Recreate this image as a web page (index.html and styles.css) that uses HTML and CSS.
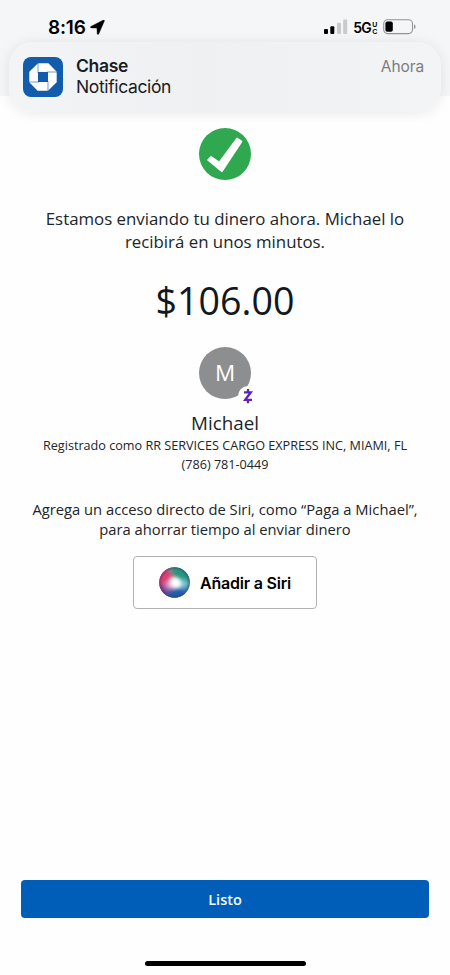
FILE: index.html
```html
<!DOCTYPE html>
<html lang="es">
<head>
<meta charset="utf-8">
<meta name="viewport" content="width=device-width, initial-scale=1">
<title>Chase</title>
<link rel="stylesheet" href="styles.css">
</head>
<body>
<div class="screen">
  <header class="top">
    <div class="status">
      <span class="time">8:16</span>
      <svg class="location" width="15" height="15" viewBox="0 0 15 15"><path d="M14.4.9 8.7 14Q7.6 15.3 7.2 13.8L6.9 8.1 1.2 7.9Q-.4 7.3.9 6.4L13 .2Q14.8-.2 14.4.9Z" fill="#000" stroke="#000" stroke-width=".4"/></svg>
      <svg class="signal" width="24" height="16" viewBox="0 0 24 16">
        <rect x="0" y="10" width="4" height="5" rx="1"/><rect x="6.3" y="7.2" width="4" height="7.8" rx="1"/>
        <rect class="off" x="13" y="3.8" width="4" height="11.2" rx="1"/><rect class="off" x="19.2" y="0.4" width="4" height="14.6" rx="1"/>
      </svg>
      <span class="network">5G</span>
      <span class="band"><span>U</span><span>C</span></span>
      <svg class="battery" width="33" height="16" viewBox="0 0 33 16">
        <rect x=".7" y=".8" width="28.8" height="13.8" rx="4" fill="none" stroke="#929394" stroke-width="1.1"/>
        <rect x="2.4" y="2.6" width="7.4" height="10.2" rx="1.8" fill="#000"/>
        <path d="M31 5.3Q32.6 6 32.6 7.7T31 10.1Z" fill="#929394"/>
      </svg>
    </div>
    <section class="notice">
      <svg class="app" width="40" height="40" viewBox="0 0 40 40">
        <rect width="40" height="40" rx="8" fill="#115dab"/>
        <path d="M15 6.3H25.4L33.7 14.8V25.2L25 33.7H14.6L6.3 25.2V14.8Z" fill="#fff"/>
        <rect x="15" y="15" width="10" height="10" fill="#115dab"/>
        <path d="M15 6V16M24 15H34M25 24V34M16 25H6" stroke="#115dab" stroke-width=".6"/>
      </svg>
      <div class="notice-text">
        <strong>Chase</strong>
        <span class="message">Notificación</span>
      </div>
      <span class="when">Ahora</span>
    </section>
  </header>

  <main class="content">
    <svg class="success" width="52" height="52" viewBox="0 0 52 52">
      <circle cx="26" cy="26" r="26" fill="#2fa84f"/>
      <path d="M9 32 12.1 28.8 20.3 34.4 38 10.4 42.6 13.5 22.9 43.3Z" fill="#fff" stroke="#fff" stroke-width="1.6" stroke-linejoin="round"/>
    </svg>
    <p class="sending"><span class="row">Estamos enviando tu dinero ahora. Michael lo</span><span class="row">recibirá en unos minutos.</span></p>
    <p class="amount"><span>$106.00</span></p>
    <div class="avatar">
      <span>M</span>
      <svg class="zelle" width="20" height="20" viewBox="0 0 20 20">
        <circle cx="10" cy="10" r="10" fill="#fefefe"/>
        <path d="M6 6.3H12.8L7.2 13.8H14M10 3V6M10 14V17.2" fill="none" stroke="#5a25b8" stroke-width="2.3"/>
      </svg>
    </div>
    <h1 class="name">Michael</h1>
    <p class="registered"><span class="row">Registrado como RR SERVICES CARGO EXPRESS INC, MIAMI, FL</span><span class="row">(786) 781-0449</span></p>
    <p class="shortcut"><span class="row">Agrega un acceso directo de Siri, como “Paga a Michael”,</span><span class="row">para ahorrar tiempo al enviar dinero</span></p>
    <button class="siri">
      <svg class="orb" width="31" height="31" viewBox="0 0 31 31">
        <defs>
          <clipPath id="disc"><circle cx="15.5" cy="15.5" r="15.3"/></clipPath>
          <filter id="soft" x="-40%" y="-40%" width="180%" height="180%"><feGaussianBlur stdDeviation="2.2"/></filter>
          <radialGradient id="rim"><stop offset=".78" stop-color="#292547" stop-opacity="0"/><stop offset="1" stop-color="#292547" stop-opacity=".4"/></radialGradient>
        </defs>
        <g clip-path="url(#disc)">
          <rect width="31" height="31" fill="#477fae"/>
          <g filter="url(#soft)">
            <path d="M8-2H33V18L17 15Z" fill="#259582"/>
            <path d="M-2 3 9 1 17 15 8 22-2 20Z" fill="#dc3a76"/>
            <path d="M-2 19 16 16 10 33H0Z" fill="#7d3f91"/>
            <path d="M8 23 26 20 25 33H7Z" fill="#225ba8"/>
            <ellipse cx="24" cy="17" rx="6" ry="4" fill="#74c6d5"/>
            <ellipse cx="11" cy="18" rx="5" ry="4" fill="#dc9cc6"/>
          </g>
          <ellipse cx="16.5" cy="16" rx="5.5" ry="5" fill="#fff" filter="url(#soft)"/>
          <path d="M10 11 18 12 22 18 17 20Z" fill="#fff" filter="url(#soft)"/>
          <circle cx="15.5" cy="15.5" r="15.5" fill="url(#rim)"/>
        </g>
      </svg>
      <span class="siri-label">Añadir a Siri</span>
    </button>
  </main>

  <footer class="bottom">
    <button class="done">Listo</button>
    <div class="home"></div>
  </footer>
</div>
</body>
</html>
```
FILE: styles.css
```css
* { box-sizing: border-box; }
body { margin: 0; background: #fff; }
p, h1 { margin: 0; font-weight: 400; }
button { font: inherit; padding: 0; }
svg { display: block; flex: none; }

.screen {
  display: flex;
  flex-direction: column;
  width: 450px;
  height: 975px;
  overflow: hidden;
  background: #fefefe;
  font-family: "Open Sans", sans-serif;
  color: #20252a;
}

.top {
  height: 96px;
  flex: none;
  padding: 0 9px;
  background: #f5f6f8;
  font-family: Inter, sans-serif;
  color: #000;
}
.status {
  display: flex;
  height: 42px;
  padding: 18px 25px 0 39px;
  align-items: flex-start;
}
.time { width: 43px; font-size: 19px; line-height: 19px; font-weight: 600; letter-spacing: -.2px; }
.location { margin-top: 2px; }
.signal { margin: 1px 0 0 219px; }
.signal .off { fill: #c9cacc; }
.network { width: 18px; margin-left: 5px; font: 600 14px/20px Inter, sans-serif; letter-spacing: -.6px; }
.band {
  display: flex;
  flex-direction: column;
  width: 6px;
  margin: 3px 5px 0 1px;
  font: 700 7px/7px "Liberation Sans", sans-serif;
}
.battery { margin-top: 1px; }

.notice {
  display: flex;
  height: 70px;
  padding: 15px 18px 0 14px;
  border-radius: 24px;
  background: linear-gradient(90deg, #f3f4f5, #eff0f2 45%, #f3f4f6);
  box-shadow: 0 1px 14px rgba(0, 0, 0, .09);
}
.notice-text { display: flex; flex-direction: column; margin-left: 13px; font-size: 17.5px; line-height: 22px; margin-top: -2px; color: #1b1c1e; }
.notice-text strong { font-weight: 600; letter-spacing: -.3px; }
.message { margin-top: -1px; letter-spacing: -.37px; }
.when { margin: -1px -1px 0 auto; font-size: 15.5px; line-height: 22px; color: #7b7d81; letter-spacing: -.1px; }

.content { display: flex; flex: 1; flex-direction: column; align-items: center; padding-top: 32px; text-align: center; }
.row { display: block; white-space: nowrap; }
.sending { margin-top: 27px; font-size: 16.83px; line-height: 23px; }
.amount { margin-top: 23px; font-size: 37.6px; line-height: 50px; color: #101820; }
.avatar {
  position: relative;
  width: 52px;
  height: 52px;
  margin-top: 21px;
  border-radius: 50%;
  background: #8d8e8f;
  color: #fff;
  font-size: 22.5px;
  line-height: 51px;
}
.zelle { position: absolute; left: 39px; top: 39px; }
.name { margin-top: 12px; font-size: 18.8px; line-height: 24px; }
.registered { margin-top: 2px; font-size: 12.63px; line-height: 18px; }
.registered .row + .row { padding-top: 1px; }
.shortcut { margin-top: 25px; font-size: 14.76px; line-height: 20px; }
.siri {
  display: flex;
  align-items: center;
  width: 184px;
  height: 53px;
  margin-top: 17px;
  padding-left: 25px;
  border: 1px solid #b1b2b4;
  border-radius: 4px;
  background: #fff;
  color: #000;
}
.siri-label { margin-left: 10px; font: 600 16px/24px Inter, sans-serif; letter-spacing: -.2px; white-space: nowrap; }

.bottom { display: flex; flex-direction: column; align-items: center; height: 95px; flex: none; }
.done { width: 408px; height: 38px; border: 0; border-radius: 4px; background: #005eb8; color: #f3faff; font-size: 14.5px; font-weight: 600; line-height: 38px; padding-top: 1px; }
.home { width: 161px; height: 5px; margin-top: 43px; border-radius: 3px; background: #000; }
```
